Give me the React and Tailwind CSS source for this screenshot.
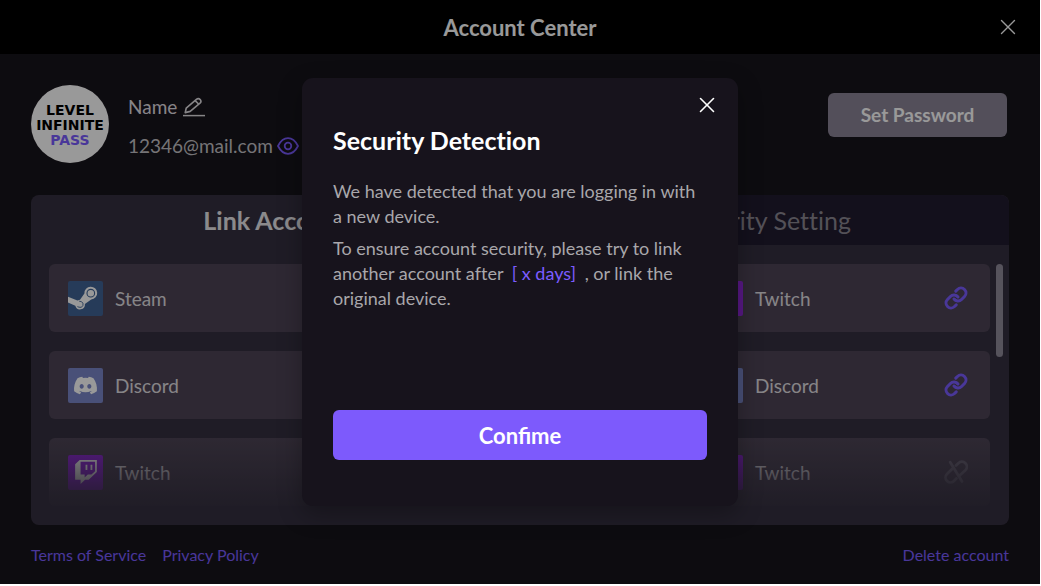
import { FaDiscord, FaTwitch } from 'react-icons/fa';
import { Link, X } from 'lucide-react';

function SteamLogo() {
  return (
    <svg viewBox="0 0 35 35" className="size-full" aria-hidden="true">
      <path
        d="M0 15.8 L9.4 19.6 L12 18.8 L16.4 12.4 A6.4 6.4 0 1 1 23.2 18.5 L16.9 23 A4.9 4.9 0 0 1 7.3 24.8 L0 21.6 Z"
        fill="#fff"
      />
      <circle cx="22.8" cy="12.2" r="3.8" fill="none" stroke="#406394" strokeWidth="1.1" />
      <path d="M9.4 25.6 L11 26.2 A3 3 0 1 0 13.2 20.6 L11.2 20.2" fill="none" stroke="#406394" strokeWidth="0.9" />
    </svg>
  );
}

function PencilIcon() {
  return (
    <svg viewBox="0 0 22 20" className="h-5 w-[22px]" fill="none" stroke="currentColor" strokeWidth="1.6" strokeLinejoin="round" aria-hidden="true">
      <path d="M2.2 15.6 L3.2 11.2 L13.4 2.4 Q15.4 0.8 17.2 2.6 Q18.8 4.6 17 6.2 L7.2 14.4 Z" />
      <path d="M12.2 3.6 L15.8 7.2" />
      <path d="M0 18.6 H22" strokeWidth="1.5" />
    </svg>
  );
}

function EyeIcon() {
  return (
    <svg viewBox="0 0 22 18" className="h-[18px] w-[22px]" fill="none" stroke="currentColor" strokeWidth="1.8" strokeLinejoin="round" aria-hidden="true">
      <path d="M1 9 Q5 1.2 11 1.2 Q17 1.2 21 9 Q17 16.8 11 16.8 Q5 16.8 1 9 Z" />
      <circle cx="11" cy="9" r="3.3" />
    </svg>
  );
}

function UnlinkIcon() {
  return (
    <svg viewBox="0 0 24 24" className="size-6" fill="none" stroke="currentColor" strokeWidth="2.8" strokeLinecap="round" aria-hidden="true">
      <path d="M12 5.6 L14.4 3.2 A4.9 4.9 0 0 1 21.4 10.2 L15.6 15.6" />
      <path d="M8.6 8.4 L3 14 A4.9 4.9 0 0 0 10 21 L12.4 18.6" />
      <path d="M6.2 2.2 L18 21.6" />
    </svg>
  );
}

const providers = {
  steam: { label: 'Steam', tile: 'bg-[#406394]', logo: <SteamLogo /> },
  discord: { label: 'Discord', tile: 'bg-[#7a86c8]', logo: <FaDiscord className="size-[25px] text-white" /> },
  twitch: { label: 'Twitch', tile: 'bg-[#9128dc]', logo: <FaTwitch className="size-6 text-white" /> },
};

// a slot without a provider renders as an empty card
const accounts = [
  { id: 1, provider: 'steam', linked: true },
  { id: 2 },
  { id: 3, provider: 'twitch', linked: true },
  { id: 4, provider: 'discord', linked: true },
  { id: 5 },
  { id: 6, provider: 'discord', linked: true },
  { id: 7, provider: 'twitch', linked: true },
  { id: 8 },
  { id: 9, provider: 'twitch', linked: false },
];

function AccountCard({ account }) {
  if (!account.provider) return <li className="h-17 rounded-md bg-[#4d4455]" />;

  const { label, tile, logo } = providers[account.provider];

  return (
    <li className="flex h-17 items-center rounded-md bg-[#4d4455] pl-[19px] pr-[22px]">
      <span className={`flex size-[35px] items-center justify-center rounded-xs ${tile}`}>{logo}</span>
      <span className="ml-3 pt-0.5 text-[19px] leading-7 text-[#e0dee2]">{label}</span>
      {account.linked ? (
        <button type="button" aria-label={`Unlink ${label}`} className="ml-auto text-[#7b5cff]">
          <Link className="size-6" strokeWidth={3} />
        </button>
      ) : (
        <button type="button" aria-label={`Link ${label}`} className="ml-auto text-[#6e6878]">
          <UnlinkIcon />
        </button>
      )}
    </li>
  );
}

function Profile() {
  return (
    <section className="flex items-start justify-between">
      <div className="flex items-center">
        <div className="flex size-[78px] flex-col items-center justify-center rounded-full bg-white pt-0.5 font-['DejaVu_Sans'] text-[14px] leading-[15px] font-bold text-black">
          <span>LEVEL</span>
          <span>INFINITE</span>
          <span className="text-[#7b5cff]">PASS</span>
        </div>
        <div className="ml-[19px] flex flex-col gap-[9px] pt-1 text-[19px] leading-[30px]">
          <div className="flex items-center gap-1.5 text-[#e0dee2]">
            <span>Name</span>
            <button type="button" aria-label="Edit name">
              <PencilIcon />
            </button>
          </div>
          <div className="flex items-center gap-1 text-[#c4c2c6]">
            <span>12346@mail.com</span>
            <button type="button" aria-label="Show email" className="text-[#7b5cff]">
              <EyeIcon />
            </button>
          </div>
        </div>
      </div>
      <button type="button" className="mt-2 mr-0.5 h-11 w-[179px] rounded-md bg-[#8b8497] text-[19px] font-bold text-white">
        Set Password
      </button>
    </section>
  );
}

function AccountPanel() {
  return (
    <section className="mt-8 overflow-hidden rounded-lg bg-[#353040]">
      <div role="tablist" className="grid h-[50px] grid-cols-2 text-[25px]">
        <button type="button" role="tab" aria-selected="true" className="pt-0.5 font-bold text-[#e8e6ea]">
          Link Account
        </button>
        <button type="button" role="tab" aria-selected="false" className="rounded-tr-lg bg-[#211b2f] pt-0.5 text-[#8b8792]">
          Security Setting
        </button>
      </div>
      <div className="flex py-[19px] pl-[18px] pr-[6px]">
        <div className="relative flex-1">
          <ul className="grid grid-cols-3 gap-[19px]">
            {accounts.map((account) => (
              <AccountCard key={account.id} account={account} />
            ))}
          </ul>
          <div className="pointer-events-none absolute inset-x-0 bottom-0 h-17 bg-linear-to-b from-transparent to-[#353040]/95" />
        </div>
        <div className="ml-[6px] h-[93px] w-[7px] rounded-full bg-[#8f8a99]" />
      </div>
    </section>
  );
}

function SecurityDialog() {
  return (
    <div className="absolute inset-0 flex items-center justify-center bg-black/40">
      <div
        role="dialog"
        aria-modal="true"
        aria-labelledby="security-title"
        className="w-full max-w-[436px] rounded-[11px] bg-[#17131c] shadow-[0_8px_24px_rgba(0,0,0,0.3)]"
      >
        <div className="flex justify-end px-6 pt-5">
          <button type="button" aria-label="Close dialog" className="flex size-3.5 items-center justify-center text-white">
            <X className="size-[26px] shrink-0" strokeWidth={1.5} />
          </button>
        </div>
        <div className="px-[31px] pb-[46px]">
          <h2 id="security-title" className="mt-[13px] text-[25px] leading-[30px] font-bold text-white">
            Security Detection
          </h2>
          <div className="mt-6 space-y-[7px] text-lg leading-[25px] text-[#a9a7ab]">
            <p>We have detected that you are logging in with a new device.</p>
            <p>
              To ensure account security, please try to link another account after{' '}
              <span className="mx-1 text-[#7b5cff]">[ x days]</span> , or link the original device.
            </p>
          </div>
          <button
            type="button"
            className="mt-[99px] h-[50px] w-full rounded-md bg-[#7d5afc] text-[22px] font-bold text-white [font-variant-ligatures:normal]"
          >
            Confime
          </button>
        </div>
      </div>
    </div>
  );
}

export default function App() {
  return (
    <div className="flex min-h-screen flex-col bg-white pr-px pb-0.5 font-[Lato,sans-serif] [font-variant-ligatures:none]">
      <div className="relative flex flex-1 flex-col bg-[#17141b]">
        <header className="grid h-[54px] grid-cols-[1fr_auto_1fr] items-center bg-black px-[18px] text-white">
          <h1 className="col-start-2 text-[22px] font-bold">Account Center</h1>
          <button type="button" aria-label="Close" className="flex size-7 items-center justify-center justify-self-end">
            <X className="size-[26px]" strokeWidth={1.3} />
          </button>
        </header>
        <main className="px-[31px] pt-[31px]">
          <Profile />
          <AccountPanel />
          <footer className="mt-[18px] flex gap-4 text-base leading-6 text-[#7b5cff]">
            <a href="#terms">Terms of Service</a>
            <a href="#privacy">Privacy Policy</a>
            <a href="#delete" className="ml-auto">
              Delete account
            </a>
          </footer>
        </main>
        <SecurityDialog />
      </div>
    </div>
  );
}
